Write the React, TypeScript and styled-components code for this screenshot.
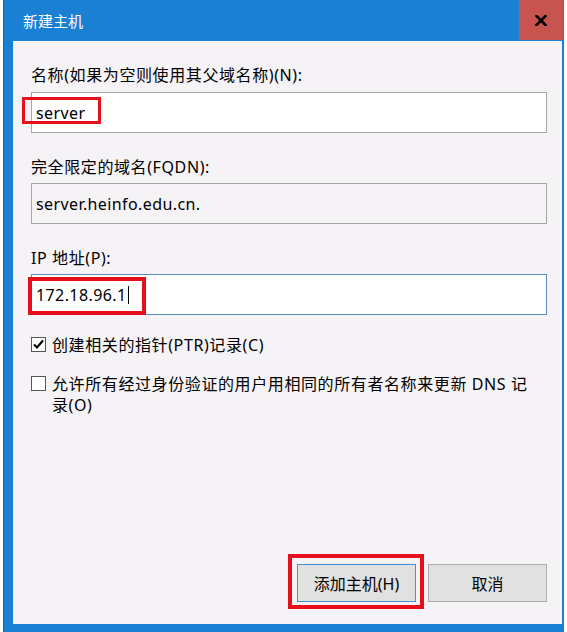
import React from "react";
import styled, { createGlobalStyle } from "styled-components";

const Global = createGlobalStyle`
  html, body { margin: 0; padding: 0; background: #ffffff; }
  body { font-family: "Noto Sans", "Noto Sans CJK SC", sans-serif; }
`;

const Window = styled.div`
  margin-left: 3px;
  width: 560px;
  height: 632px;
  border-left: 1px solid #2b5b8a;
  background: #1a80d4;
  display: flex;
  flex-direction: column;
  position: relative;
`;

const TitleBar = styled.div`
  height: 41px;
  display: flex;
  align-items: flex-start;
  justify-content: space-between;
  flex-shrink: 0;
`;

const Title = styled.div`
  color: #ffffff;
  font-family: "Noto Sans CJK SC", sans-serif;
  font-size: 15px;
  line-height: 20px;
  margin: 11px 0 0 19px;
`;

const CloseButton = styled.div`
  width: 44px;
  height: 40px;
  background: #c85450;
  display: flex;
  align-items: center;
  justify-content: center;
  margin-right: 1px;
`;

const Content = styled.div`
  flex: 1;
  margin: 0 2px 8px 9px;
  background: #f6f3f6;
  border-left: 1px solid #e6eef8;
  padding: 24px 15px 22px 17px;
  display: flex;
  flex-direction: column;
`;

const Label = styled.div<{ $top?: number }>`
  font-family: "Noto Sans", "Noto Sans CJK SC", sans-serif;
  font-size: 16px;
  line-height: 20px;
  letter-spacing: 0.6px;
  color: #000;
  margin-top: ${(p) => p.$top ?? 0}px;
`;

const TextBox = styled.div<{ $readonly?: boolean; $focused?: boolean; $top?: number }>`
  position: relative;
  height: 41px;
  box-sizing: border-box;
  margin-top: ${(p) => p.$top ?? 6}px;
  border: 1px solid ${(p) => (p.$focused ? "#5b8cbf" : "#a5a5a5")};
  background: ${(p) => (p.$readonly ? "#f6f3f6" : "#ffffff")};
  display: flex;
  align-items: center;
  padding-left: 4px;
  font-family: "Noto Sans", "Noto Sans CJK SC", sans-serif;
  font-size: 16px;
  letter-spacing: 0.4px;
  color: #000;
`;

const Caret = styled.span`
  display: inline-block;
  width: 1px;
  height: 18px;
  background: #000;
  margin-left: 2px;
`;

const Highlight = styled.div<{ $l: number; $t: number; $w: number; $h: number; $b: number }>`
  position: absolute;
  left: ${(p) => p.$l}px;
  top: ${(p) => p.$t}px;
  width: ${(p) => p.$w}px;
  height: ${(p) => p.$h}px;
  box-sizing: border-box;
  border: ${(p) => p.$b}px solid #e5101b;
  pointer-events: none;
`;

const CheckRow = styled.div<{ $top: number }>`
  display: flex;
  align-items: flex-start;
  margin-top: ${(p) => p.$top}px;
`;

const Box = styled.div`
  width: 15px;
  height: 15px;
  box-sizing: border-box;
  border: 1px solid #555;
  background: #fff;
  flex-shrink: 0;
  margin-top: 2px;
  display: flex;
  align-items: center;
  justify-content: center;
`;

const CheckText = styled.div`
  margin-left: 6px;
  font-family: "Noto Sans", "Noto Sans CJK SC", sans-serif;
  font-size: 16px;
  line-height: 21px;
  color: #000;
  letter-spacing: 0.6px;
  max-width: 484px;
`;

const Spacer = styled.div`
  flex: 1;
`;

const ButtonRow = styled.div`
  display: flex;
  justify-content: flex-end;
  gap: 12px;
`;

const Button = styled.div<{ $default?: boolean }>`
  position: relative;
  width: 119px;
  height: 38px;
  box-sizing: border-box;
  background: #e1e1e1;
  border: 1px solid ${(p) => (p.$default ? "#4a8fd3" : "#adadad")};
  display: flex;
  align-items: center;
  justify-content: center;
  font-family: "Noto Sans", "Noto Sans CJK SC", sans-serif;
  font-size: 16px;
  color: #000;
`;

export default function App() {
  return (
    <>
      <Global />
      <Window>
        <TitleBar>
          <Title>新建主机</Title>
          <CloseButton>
            <svg width="12" height="11" viewBox="0 0 12 11">
              <path d="M1.5 1 L10.5 10 M10.5 1 L1.5 10" stroke="#000" strokeWidth="2.6" strokeLinecap="square" />
            </svg>
          </CloseButton>
        </TitleBar>
        <Content>
          <Label>名称(如果为空则使用其父域名称)(N):</Label>
          <TextBox $top={7}>
            server
            <Highlight $l={-10} $t={4} $w={79} $h={27} $b={3} />
          </TextBox>
          <Label $top={24}>完全限定的域名(FQDN):</Label>
          <TextBox $readonly>server.heinfo.edu.cn.</TextBox>
          <Label $top={24}>IP 地址(P):</Label>
          <TextBox $focused>
            172.18.96.1
            <Caret />
            <Highlight $l={-4} $t={2} $w={118} $h={38} $b={4} />
          </TextBox>
          <CheckRow $top={20}>
            <Box>
              <svg width="13" height="13" viewBox="0 0 13 13">
                <path d="M2 6.5 L5 9.5 L11 2.5" stroke="#000" strokeWidth="2.2" fill="none" />
              </svg>
            </Box>
            <CheckText>创建相关的指针(PTR)记录(C)</CheckText>
          </CheckRow>
          <CheckRow $top={18}>
            <Box />
            <CheckText>允许所有经过身份验证的用户用相同的所有者名称来更新 DNS 记录(O)</CheckText>
          </CheckRow>
          <Spacer />
          <ButtonRow>
            <Button $default>
              添加主机(H)
              <Highlight $l={-10} $t={-11} $w={136} $h={55} $b={4} />
            </Button>
            <Button>取消</Button>
          </ButtonRow>
        </Content>
      </Window>
    </>
  );
}
